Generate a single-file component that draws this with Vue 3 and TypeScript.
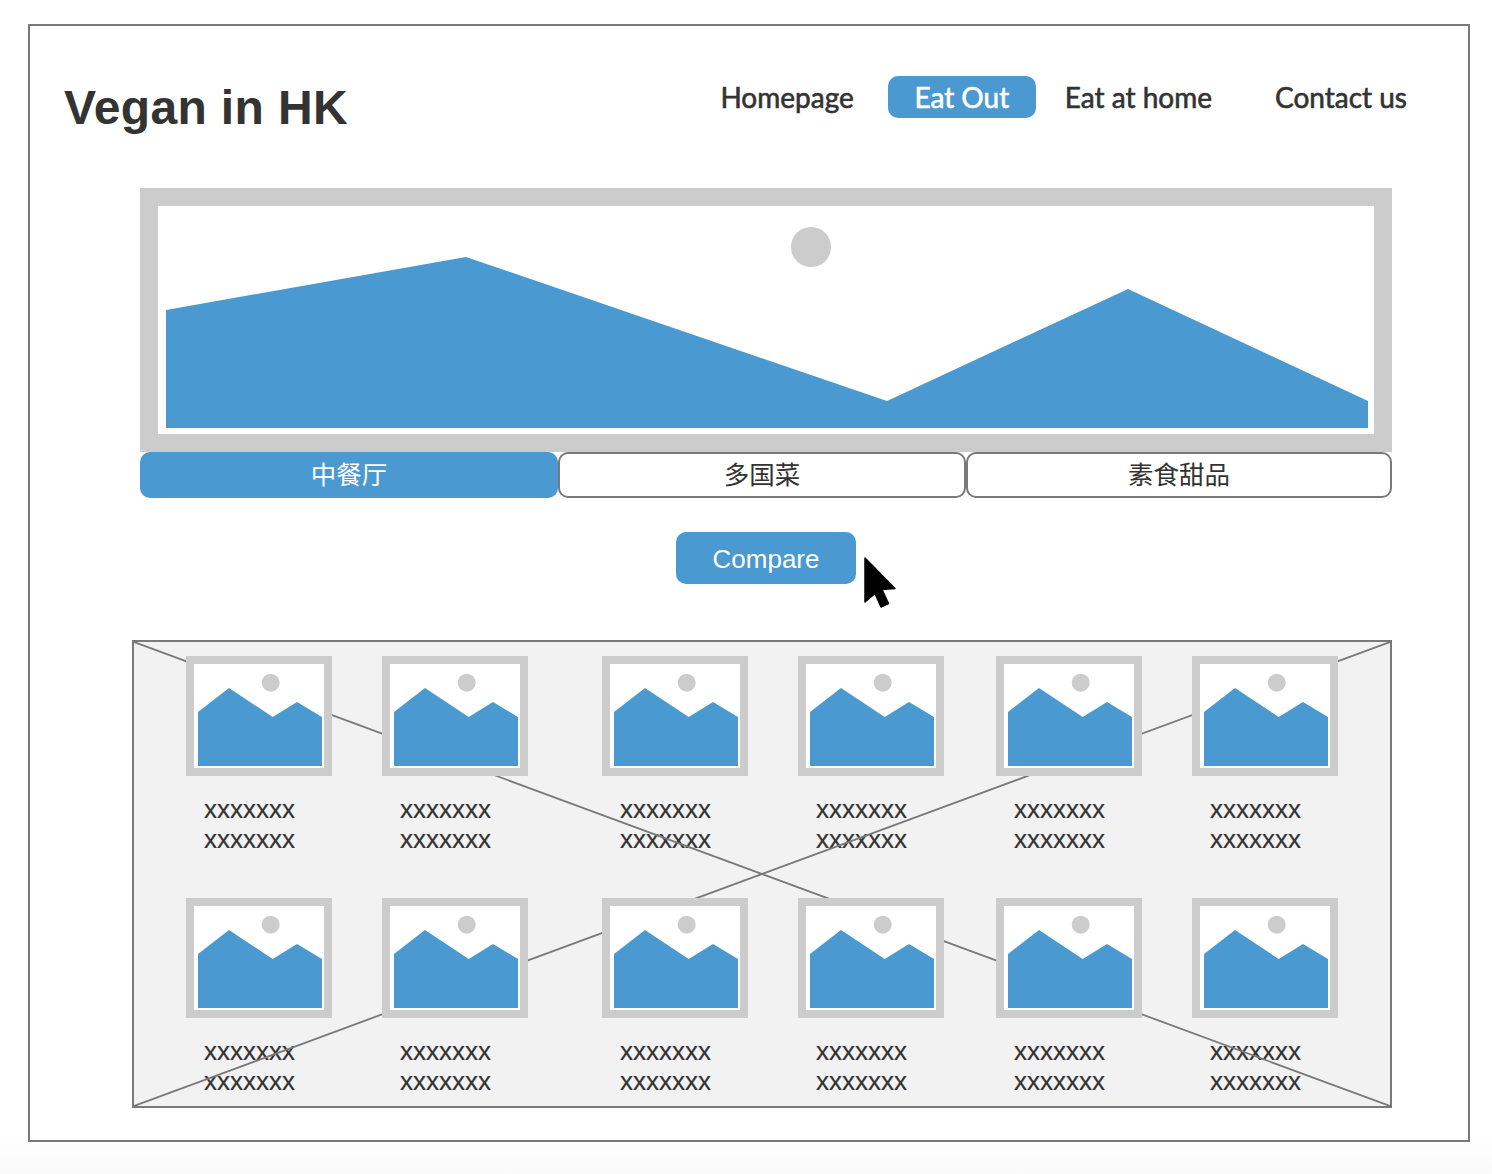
<script setup lang="ts">
const navItems = [
  { label: 'Homepage', cls: 'nav__item--home' },
  { label: 'Eat Out', cls: 'nav__item--active' },
  { label: 'Eat at home', cls: 'nav__item--kitchen' },
  { label: 'Contact us', cls: 'nav__item--contact' },
]

const tabs = [
  { label: '中餐厅', active: true },
  { label: '多国菜', active: false },
  { label: '素食甜品', active: false },
]

// 12 placeholder cards, 6 per row
const cards = Array.from({ length: 12 }, (_, i) => i)
</script>

<template>
  <div class="page">
    <div class="frame">
      <header class="header">
        <h1 class="header__title">Vegan in HK</h1>
        <nav class="nav">
          <a v-for="item in navItems" :key="item.label" class="nav__item" :class="item.cls">{{ item.label }}</a>
        </nav>
      </header>

      <main class="content">
        <div class="hero">
          <svg class="hero__img" viewBox="0 0 1216 228" width="1216" height="228">
            <circle cx="653" cy="41" r="20" fill="#cccccc" />
            <polygon points="8,104 308,51 729,195 970,83 1210,195 1210,222 8,222" fill="#4a99d1" />
          </svg>
        </div>

        <div class="tabs">
          <button v-for="tab in tabs" :key="tab.label" class="tabs__btn" :class="{ 'tabs__btn--active': tab.active }">
            {{ tab.label }}
          </button>
        </div>

        <div class="compare">
          <div class="compare__wrap">
            <button class="compare__btn">Compare</button>
            <svg class="compare__cursor" viewBox="0 0 34 52" width="34" height="52">
              <path
                d="M1 1 L31 31.5 L18 32.5 L24.5 46.5 L17 50 L11 36.5 L1 45 Z"
                fill="#000"
                stroke="#000"
                stroke-width="1.5"
                stroke-linejoin="round"
              />
            </svg>
          </div>
        </div>

        <section class="gallery">
          <svg class="gallery__cross" viewBox="0 0 1256 464" preserveAspectRatio="none">
            <line x1="0" y1="0" x2="1256" y2="464" />
            <line x1="1256" y1="0" x2="0" y2="464" />
          </svg>
          <div class="gallery__grid">
            <div v-for="card in cards" :key="card" class="card">
              <div class="card__thumb">
                <svg viewBox="0 0 130 104" width="130" height="104">
                  <circle cx="76.7" cy="18.7" r="9" fill="#cccccc" />
                  <polygon points="4,48 35,24 78.7,53 103,38 128,53 128,102 4,102" fill="#4a99d1" />
                </svg>
              </div>
              <p class="card__text">xxxxxxx</p>
              <p class="card__text">xxxxxxx</p>
            </div>
          </div>
        </section>
      </main>
    </div>
  </div>
</template>

<style>
html,
body {
  margin: 0;
  background: #fff;
}
</style>

<style scoped>
.page {
  width: 1492px;
  height: 1174px;
  padding: 24px 22px 0 28px;
  box-sizing: border-box;
  overflow: hidden;
  background: linear-gradient(#ffffff 1142px, #fdfdfd 1143px, #fafafa 1174px);
  font-family: "Liberation Sans", Arial, sans-serif;
  color: #333;
}
.frame {
  height: 1118px;
  box-sizing: border-box;
  border: 2px solid #797979;
  background: #fff;
}
.header {
  height: 162px;
  box-sizing: border-box;
  padding: 50px 61px 0 34px;
  display: flex;
  justify-content: space-between;
  align-items: flex-start;
}
.header__title {
  margin: 4px 0 0;
  font-size: 48px;
  line-height: 56px;
  font-weight: 700;
  letter-spacing: 0.35px;
}
.nav {
  display: flex;
  align-items: center;
}
.nav__item {
  font-family: Lato, "Liberation Sans", sans-serif;
  font-size: 28px;
  font-weight: 400;
  line-height: 42px;
  white-space: nowrap;
  -webkit-text-stroke: 0.6px currentColor;
}
.nav__item--active {
  margin-left: 34px;
  width: 148px;
  text-align: center;
  border-radius: 10px;
  background: #4a99d1;
  color: #fff;
}
.nav__item--kitchen {
  margin-left: 29px;
}
.nav__item--contact {
  margin-left: 63px;
}
.content {
  margin-left: 110px;
  width: 1252px;
}
.hero {
  height: 264px;
  box-sizing: border-box;
  border: 18px solid #cccccc;
  background: #fff;
}
.hero__img {
  display: block;
}
.tabs {
  display: grid;
  grid-template-columns: 418px 408px 426px;
  height: 46px;
}
.tabs__btn {
  padding: 0 0 5px;
  box-sizing: border-box;
  border: 2px solid #797979;
  border-radius: 10px;
  background: #fff;
  color: #333;
  font-family: "Liberation Sans", "Noto Sans CJK SC", sans-serif;
  font-size: 25.5px;
}
.tabs__btn--active {
  border-color: #4a99d1;
  background: #4a99d1;
  color: #fff;
}
.compare {
  margin-top: 34px;
  display: flex;
  justify-content: center;
}
.compare__wrap {
  position: relative;
}
.compare__btn {
  display: block;
  width: 180px;
  height: 52px;
  padding: 2px 0 0;
  border: none;
  border-radius: 10px;
  background: #4a99d1;
  color: #fff;
  font-family: "Liberation Sans", Arial, sans-serif;
  font-size: 26px;
}
.compare__cursor {
  position: absolute;
  left: calc(100% + 8px);
  top: 25px;
}
.gallery {
  position: relative;
  margin: 56px 0 0 -8px;
  width: 1260px;
  height: 468px;
  box-sizing: border-box;
  border: 2px solid #797979;
  background: #f2f2f2;
  padding: 14px 0 0 52px;
}
.gallery__cross {
  position: absolute;
  inset: 0;
  width: 100%;
  height: 100%;
}
.gallery__cross line {
  stroke: #797979;
  stroke-width: 1.8;
}
.gallery__grid {
  display: grid;
  grid-template-columns: 196px 220px 196px 198px 196px 146px;
  grid-auto-rows: 242px;
}
.card__thumb {
  position: relative;
  z-index: 1;
  width: 146px;
  height: 120px;
  box-sizing: border-box;
  border: 8px solid #cccccc;
  background: #fff;
}
.card__thumb svg {
  display: block;
}
.card__text {
  margin: 0;
  padding-left: 18px;
  font-size: 26px;
  line-height: 30px;
  color: #333;
  -webkit-text-stroke: 0.2px #333;
}
.card__thumb + .card__text {
  margin-top: 18px;
}
</style>
